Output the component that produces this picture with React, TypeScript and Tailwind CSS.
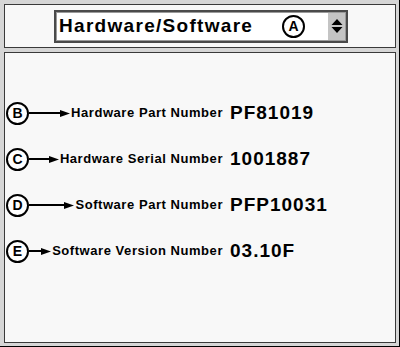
import React from "react";

const rows = [
  { k: "B", label: "Hardware Part Number", value: "PF81019" },
  { k: "C", label: "Hardware Serial Number", value: "1001887" },
  { k: "D", label: "Software Part Number", value: "PFP10031" },
  { k: "E", label: "Software Version Number", value: "03.10F" },
];

function Badge({ k }: { k: string }) {
  return (
    <div className="w-[23px] h-[23px] shrink-0 rounded-full border-2 border-black bg-white flex items-center justify-center text-[14px] font-bold leading-none text-black">
      {k}
    </div>
  );
}

function Arrow() {
  return (
    <div className="flex-1 flex items-center min-w-[16px]">
      <div className="flex-1 h-[2px] bg-black" />
      <svg width="10" height="7" viewBox="0 0 10 7" className="shrink-0">
        <polygon points="0,0 10,3.5 0,7" fill="black" />
      </svg>
    </div>
  );
}

export default function App() {
  return (
    <div
      className="w-[400px] h-[347px] bg-[#d6d6d6] border-r border-b border-black pl-[4px] pt-[4px] pr-[3px] pb-[3px] flex flex-col gap-[4px]"
      style={{ fontFamily: '"Liberation Sans", Arial, sans-serif' }}
    >
      <div className="h-[44px] shrink-0 border border-[#3a3a3a] bg-[#f8f8f8] flex items-center pl-[49px]">
        <div className="w-[294px] h-[33px] border-2 border-[#4a4a4a] bg-white flex items-stretch shadow-[inset_0_0_0_1px_#9a9a9a]">
          <div className="flex-1 flex items-center pl-[3px] text-[19px] font-bold tracking-[1.3px] text-black">
            Hardware/Software
          </div>
          <div className="flex items-center pr-[23px]">
            <Badge k="A" />
          </div>
          <div className="w-[17px] bg-[#c4c4c4] flex flex-col items-center justify-center gap-[1px] mr-[1px] my-[1px]">
            <svg width="12" height="16" viewBox="0 0 12 16">
              <polygon points="6,1 11.5,7 0.5,7" fill="black" />
              <polygon points="0.5,9 11.5,9 6,15" fill="black" />
            </svg>
          </div>
        </div>
      </div>
      <div className="flex-1 border border-[#3a3a3a] bg-[#f8f8f8] flex flex-col pt-[48px] gap-[22px]">
        {rows.map((r) => (
          <div key={r.k} className="flex items-center h-[24px]">
            <div className="w-[218px] pl-[1px] flex items-center shrink-0">
              <Badge k={r.k} />
              <Arrow />
              <span className="text-[13px] font-bold tracking-[0.55px] text-black whitespace-nowrap pl-[1px]">
                {r.label}
              </span>
            </div>
            <div className="pl-[7px] text-[19px] font-bold tracking-[1px] text-black">
              {r.value}
            </div>
          </div>
        ))}
      </div>
    </div>
  );
}
